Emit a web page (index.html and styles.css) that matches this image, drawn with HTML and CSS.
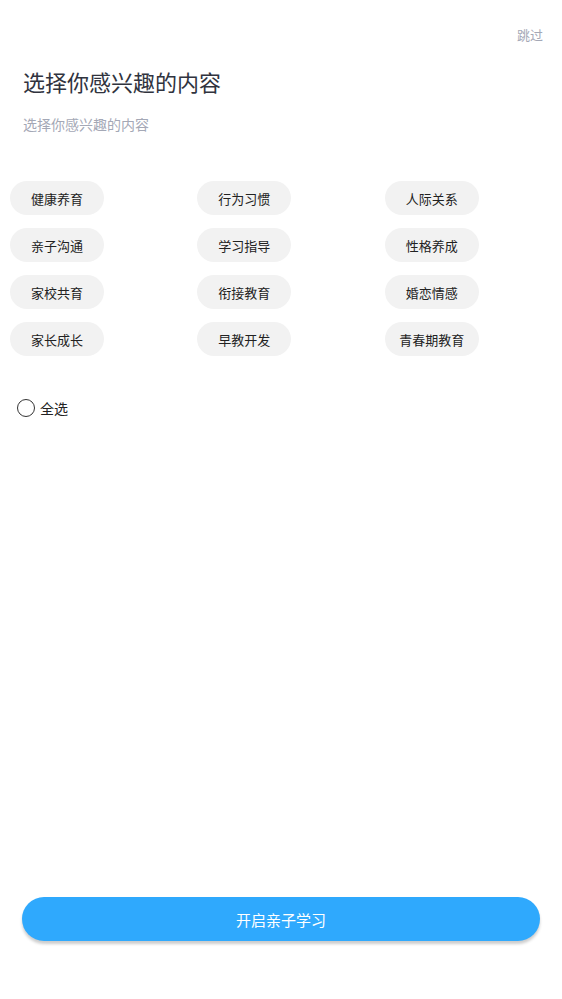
FILE: index.html
```html
<!DOCTYPE html>
<html lang="zh-CN">
  <head>
    <meta charset="UTF-8" />
    <meta name="viewport" content="width=device-width, initial-scale=1.0" />
    <title>选择你感兴趣的内容</title>
    <link rel="stylesheet" href="styles.css">
  </head>
  <body>
    <div class="page">
      <div class="skip">跳过</div>
      <h1 class="title">选择你感兴趣的内容</h1>
      <p class="subtitle">选择你感兴趣的内容</p>

      <div class="tags">
        <div class="tag">健康养育</div>
        <div class="tag">行为习惯</div>
        <div class="tag">人际关系</div>
        <div class="tag">亲子沟通</div>
        <div class="tag">学习指导</div>
        <div class="tag">性格养成</div>
        <div class="tag">家校共育</div>
        <div class="tag">衔接教育</div>
        <div class="tag">婚恋情感</div>
        <div class="tag">家长成长</div>
        <div class="tag">早教开发</div>
        <div class="tag">青春期教育</div>
      </div>

      <label class="select-all">
        <span class="radio"></span>
        <span>全选</span>
      </label>

      <div class="footer">
        <button class="start-btn">开启亲子学习</button>
      </div>
    </div>
  </body>
</html>
```

FILE: styles.css
```css
:root {
  --primary-color: #2fa9fd;
  --text-color: #222;
  --title-color: #30333e;
  --muted-color: #a4a8b6;
  --tag-bg: #f2f2f2;
}

* {
  box-sizing: border-box;
}

body {
  margin: 0;
  font-family: "Noto Sans CJK SC", "Noto Sans", sans-serif;
  color: var(--text-color);
  background-color: white;
}

.page {
  display: flex;
  flex-direction: column;
  min-height: 100vh;
}

.skip {
  padding: 27px 19px 0 0;
  text-align: right;
  font-size: 13px;
  line-height: 16px;
  color: var(--muted-color);
}

.title {
  margin: 23px 0 0 23px;
  font-size: 22px;
  line-height: 30px;
  font-weight: 400;
  color: var(--title-color);
}

.subtitle {
  margin: 18px 0 0 23px;
  font-size: 14px;
  line-height: 20px;
  color: var(--muted-color);
}

.tags {
  display: grid;
  grid-template-columns: repeat(3, 1fr);
  row-gap: 13px;
  margin-top: 47px;
}

.tag {
  width: 94px;
  height: 34px;
  margin-left: 10px;
  border-radius: 17px;
  background-color: var(--tag-bg);
  display: flex;
  align-items: center;
  justify-content: center;
  font-size: 13px;
  color: var(--text-color);
}

.select-all {
  display: flex;
  align-items: center;
  gap: 5px;
  margin: 43px 0 0 17px;
  font-size: 14px;
  line-height: 18px;
}

.radio {
  width: 18px;
  height: 18px;
  border: 1.3px solid #333;
  border-radius: 50%;
}

.footer {
  margin-top: auto;
  padding: 0 22px 58px;
}

.start-btn {
  width: 100%;
  height: 44px;
  border: none;
  border-radius: 22px;
  background-color: var(--primary-color);
  color: white;
  font-family: inherit;
  font-size: 15px;
  box-shadow: 0 3px 3px rgba(0, 0, 0, 0.2);
  cursor: pointer;
}
```
